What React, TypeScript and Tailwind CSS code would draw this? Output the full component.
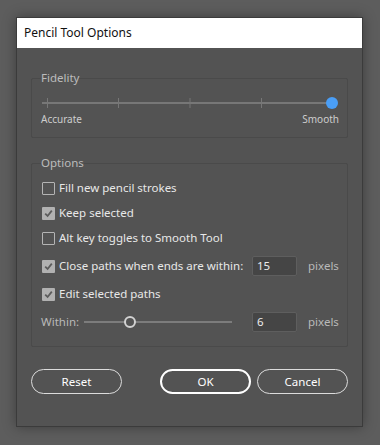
import React, { useState } from 'react';

const font = { fontFamily: '"Noto Sans", "Open Sans", Arial, sans-serif' };

interface CheckProps {
  checked: boolean;
  label: string;
  onToggle: () => void;
}

const Check: React.FC<CheckProps> = ({ checked, label, onToggle }) => (
  <label className="flex items-center h-[20px] cursor-pointer" onClick={onToggle}>
    <span
      className={`w-[13px] h-[13px] flex items-center justify-center rounded-[1px] ${
        checked ? 'bg-[#b1b1b1]' : 'border border-[#b4b4b4]'
      }`}
    >
      {checked && (
        <svg width="9" height="9" viewBox="0 0 9 9">
          <path d="M1.2 4.6 L3.6 7 L7.8 1.6" fill="none" stroke="#5c5c5c" strokeWidth="1.8" />
        </svg>
      )}
    </span>
    <span className="ml-[4px] text-[11.5px] text-[#e8e8e8] leading-none whitespace-nowrap">{label}</span>
  </label>
);

const FidelitySlider: React.FC = () => (
  <svg width="297" height="14" viewBox="0 0 297 14" className="block">
    <line x1="1" y1="7" x2="291" y2="7" stroke="#777777" strokeWidth="2" />
    {[6, 77, 148.5, 220].map((x) => (
      <line key={x} x1={x + 0.5} y1="2" x2={x + 0.5} y2="12" stroke="#777777" strokeWidth="1" />
    ))}
    <circle cx="291" cy="7" r="6" fill="#4a9ef6" />
  </svg>
);

const WithinSlider: React.FC = () => (
  <svg width="148" height="14" viewBox="0 0 148 14" className="block">
    <line x1="0" y1="7" x2="148" y2="7" stroke="#8a8a8a" strokeWidth="1.5" />
    <circle cx="46" cy="7" r="5" fill="#535353" stroke="#d2d2d2" strokeWidth="2" />
  </svg>
);

const NumBox: React.FC<{ value: string }> = ({ value }) => (
  <div className="w-[45px] h-[20px] bg-[#454545] border border-[#5e5e5e] rounded-[2px] flex items-center pl-[4px] text-[11.5px] text-[#ececec]">
    {value}
  </div>
);

const App: React.FC = () => {
  const [fill, setFill] = useState(false);
  const [keep, setKeep] = useState(true);
  const [alt, setAlt] = useState(false);
  const [close, setClose] = useState(true);
  const [edit, setEdit] = useState(true);

  return (
    <div className="w-[380px] h-[445px] bg-[#5d5d5d] pl-[16px] pt-[17px]" style={font}>
      <div className="w-[347px] h-[410px] bg-[#535353] border border-[#3b3b3b] shadow-[0_0_12px_rgba(0,0,0,0.35)] flex flex-col">
        <div className="h-[30px] bg-white flex items-center pl-[7px] text-[12px] text-[#111]">
          Pencil Tool Options
        </div>

        <div className="px-[14px]">
          <fieldset className="mt-[22px] border border-[#4a4a4a] rounded-[2px] pl-[9px] pr-[8px] pb-[12px]">
            <legend className="h-[16px] leading-[16px] text-[11.5px] text-[#bcbcbc]">Fidelity</legend>
            <div className="pt-[10px]">
              <FidelitySlider />
            </div>
            <div className="flex justify-between mt-[3px] text-[10px] leading-[12px] text-[#cdcdcd]">
              <span>Accurate</span>
              <span>Smooth</span>
            </div>
          </fieldset>

          <fieldset className="mt-[17px] border border-[#4a4a4a] rounded-[2px] pl-[10px] pb-[14px]">
            <legend className="-ml-[1px] h-[16px] leading-[16px] text-[11.5px] text-[#bcbcbc]">Options</legend>
            <div className="pt-[7px]">
              <Check checked={fill} label="Fill new pencil strokes" onToggle={() => setFill(!fill)} />
            </div>
            <div className="mt-[5px]">
              <Check checked={keep} label="Keep selected" onToggle={() => setKeep(!keep)} />
            </div>
            <div className="mt-[5px]">
              <Check checked={alt} label="Alt key toggles to Smooth Tool" onToggle={() => setAlt(!alt)} />
            </div>
            <div className="mt-[8px] flex items-center">
              <div className="w-[210px]">
                <Check checked={close} label="Close paths when ends are within:" onToggle={() => setClose(!close)} />
              </div>
              <NumBox value="15" />
              <span className="ml-[11px] text-[11.5px] text-[#b9b9b9]">pixels</span>
            </div>
            <div className="mt-[8px]">
              <Check checked={edit} label="Edit selected paths" onToggle={() => setEdit(!edit)} />
            </div>
            <div className="mt-[8px] flex items-center -ml-[1px]">
              <div className="w-[211px] flex items-center">
                <span className="text-[11.5px] text-[#b9b9b9]">Within:</span>
                <div className="ml-[5px]">
                  <WithinSlider />
                </div>
              </div>
              <NumBox value="6" />
              <span className="ml-[11px] text-[11.5px] text-[#b9b9b9]">pixels</span>
            </div>
          </fieldset>

          <div className="mt-[22px] flex justify-between">
            <button className="w-[91px] h-[25px] rounded-full border border-[#dcdcdc] text-[11.5px] text-white">
              Reset
            </button>
            <div className="flex gap-[6px]">
              <button className="w-[91px] h-[25px] rounded-full border-2 border-white text-[11.5px] text-white">
                OK
              </button>
              <button className="w-[91px] h-[25px] rounded-full border border-[#dcdcdc] text-[11.5px] text-white">
                Cancel
              </button>
            </div>
          </div>
        </div>
      </div>
    </div>
  );
};

export default App;
